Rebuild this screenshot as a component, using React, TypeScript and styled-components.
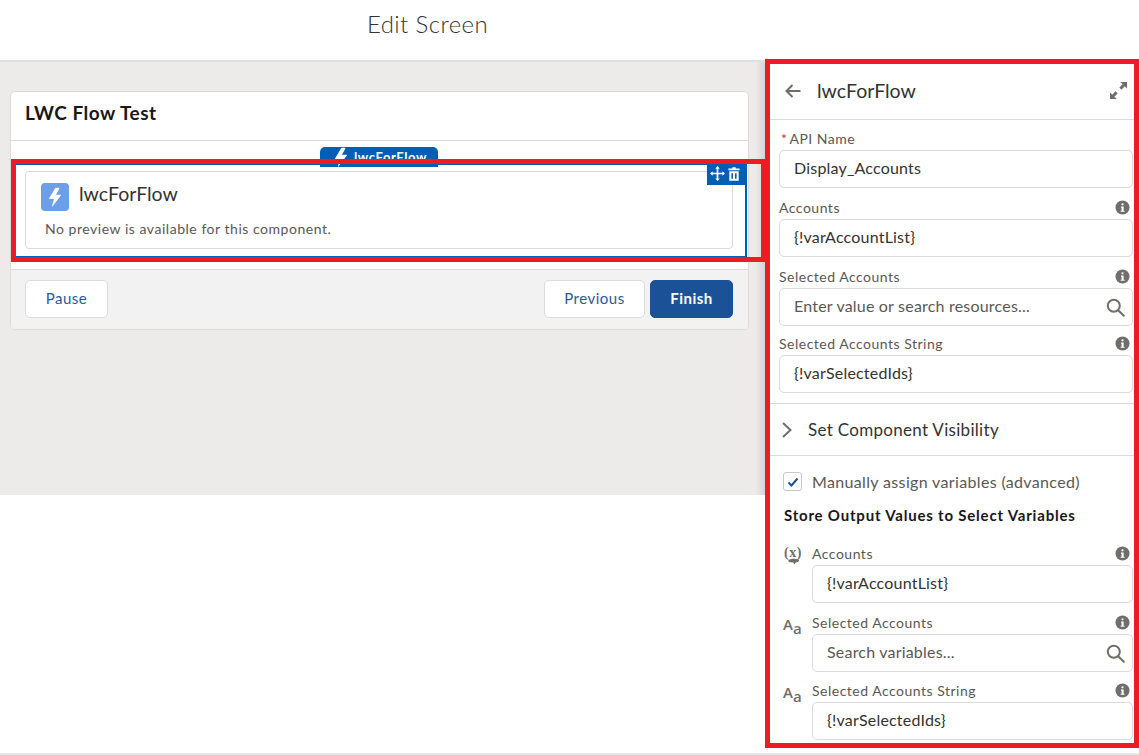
import { FC } from "react";
import styled, { createGlobalStyle } from "styled-components";

const FONT = `Lato, "Open Sans", "Liberation Sans", sans-serif`;

const Bolt: FC<{ size: number }> = ({ size }) => (
  <svg width={size} height={size} viewBox="0 0 24 24" fill="#fff">
    <path d="M12.500 1 5 13.500c-.3.500 0 1 .5 1h5.200L8.300 23c-.1.500.4.700.7.300l10-13c.3-.5 0-1-.5-1h-5.300l4.100-7.500c.2-.5-.1-.8-.5-.8h-3.300c-.4 0-.8.200-1 .500z" />
  </svg>
);

const InfoIcon: FC = () => (
  <InfoWrap viewBox="0 0 16 16" width="15" height="15">
    <circle cx="8" cy="8" r="7.500" fill="#706e6b" />
    <circle cx="8" cy="4.600" r="1.200" fill="#fff" />
    <path d="M6.400 7h2.800v4.400h1v1.200H6v-1.200h1V8.200h-.6z" fill="#fff" />
  </InfoWrap>
);

const SearchIcon: FC = () => (
  <svg width="19" height="19" viewBox="0 0 19 19" fill="none" stroke="#706e6b" strokeWidth="2">
    <circle cx="7.800" cy="7.800" r="6" />
    <path d="m12.200 12.200 5.600 5.600" strokeLinecap="round" />
  </svg>
);

const TextTypeIcon: FC = () => (
  <TypeMark>
    <BigA>A</BigA>
    <SmallA>a</SmallA>
  </TypeMark>
);

const VariableIcon: FC = () => (
  <svg width="24" height="20" viewBox="0 0 24 20">
    <text x="1" y="11" fontFamily="Liberation Serif, serif" fontSize="14" fontWeight="700" letterSpacing="0.5" fill="#706e6b">
      (x)
    </text>
    <path d="M5.500 14c3-1.500 7-1.500 10-.5 1 .6.600 2.200-.8 2.500l-2 .4-1.200 2-1.200-2-3-.2C5.900 16.400 4.900 15 5.500 14z" fill="#706e6b" />
  </svg>
);

const Field: FC<{
  label: string;
  value?: string;
  placeholder?: string;
  required?: boolean;
  info?: boolean;
  gap?: number;
}> = ({ label, value, placeholder, required, info = true, gap = 12 }) => (
  <FieldBox $gap={gap}>
    <LabelRow>
      <Label>
        {required && <Star>*</Star>}
        {label}
      </Label>
      {info && <InfoIcon />}
    </LabelRow>
    <InputBox>
      {placeholder ? <Placeholder>{placeholder}</Placeholder> : <span>{value}</span>}
      {placeholder && <SearchIcon />}
    </InputBox>
  </FieldBox>
);

const App: FC = () => {
  return (
    <Page>
      <GlobalStyle />
      <TopBar>
        <Title>Edit Screen</Title>
      </TopBar>
      <Main>
        <LeftColumn>
          <Canvas>
            <Card>
              <CardHeader>LWC Flow Test</CardHeader>
              <CardBody>
                <Selected>
                  <Tab>
                    <Bolt size={20} />
                    <span>lwcForFlow</span>
                  </Tab>
                  <Tools>
                    <svg width="15" height="15" viewBox="0 0 16 16" fill="#fff">
                      <path d="M8 0 5.600 2.800h1.500v4.300H2.800V5.600L0 8l2.800 2.400V8.900h4.300v4.300H5.600L8 16l2.400-2.800H8.900V8.900h4.300v1.500L16 8l-2.800-2.400v1.500H8.900V2.800h1.500z" />
                    </svg>
                    <svg width="12" height="14" viewBox="0 0 14 16" fill="#fff">
                      <path d="M5 0h4v1.600h4.500v2H.5v-2H5zM1.500 4.800h11V16h-11zM4 7v6.600h1.800V7zm4.200 0v6.600H10V7z" fillRule="evenodd" />
                    </svg>
                  </Tools>
                  <Inner>
                    <InnerHead>
                      <IconTile>
                        <Bolt size={20} />
                      </IconTile>
                      <InnerName>lwcForFlow</InnerName>
                    </InnerHead>
                    <Preview>No preview is available for this component.</Preview>
                  </Inner>
                </Selected>
              </CardBody>
              <CardFooter>
                <Button>Pause</Button>
                <FooterRight>
                  <Button $wide>Previous</Button>
                  <Button $primary>Finish</Button>
                </FooterRight>
              </CardFooter>
            </Card>
          </Canvas>
        </LeftColumn>
        <Panel>
          <PanelHeader>
            <svg width="18" height="18" viewBox="0 0 18 18" fill="none" stroke="#706e6b" strokeWidth="2">
              <path d="M16.500 9H2.500M8.500 3 2.500 9l6 6" />
            </svg>
            <PanelTitle>lwcForFlow</PanelTitle>
            <svg width="17" height="17" viewBox="0 0 18 18" fill="#706e6b">
              <path d="M11 0h7v7l-2.400-2.400-3.500 3.500-2.200-2.200 3.500-3.500zM7 18H0v-7l2.400 2.400 3.500-3.500 2.200 2.200-3.500 3.500z" />
            </svg>
          </PanelHeader>
          <Fields>
            <Field label="API Name" value="Display_Accounts" required info={false} />
            <Field label="Accounts" value="{!varAccountList}" />
            <Field label="Selected Accounts" placeholder="Enter value or search resources..." gap={10} />
            <Field label="Selected Accounts String" value="{!varSelectedIds}" />
          </Fields>
          <Visibility>
            <svg width="14" height="18" viewBox="0 0 14 18" fill="none" stroke="#706e6b" strokeWidth="2">
              <path d="m3 2 7.500 7L3 16" />
            </svg>
            <span>Set Component Visibility</span>
          </Visibility>
          <Outputs>
            <CheckRow>
              <CheckBox>
                <svg width="12" height="12" viewBox="0 0 12 12" fill="none" stroke="#1b5297" strokeWidth="2">
                  <path d="m1.500 6.500 3 3 6-7" />
                </svg>
              </CheckBox>
              <CheckLabel>Manually assign variables (advanced)</CheckLabel>
            </CheckRow>
            <StoreTitle>Store Output Values to Select Variables</StoreTitle>
            <OutputRow>
              <VariableIcon />
              <Field label="Accounts" value="{!varAccountList}" />
            </OutputRow>
            <OutputRow>
              <TextTypeIcon />
              <Field label="Selected Accounts" placeholder="Search variables..." gap={11} />
            </OutputRow>
            <OutputRow>
              <TextTypeIcon />
              <Field label="Selected Accounts String" value="{!varSelectedIds}" />
            </OutputRow>
          </Outputs>
        </Panel>
      </Main>
      <RedBox $left={765} $top={59} $width={374} $height={689} />
      <RedBox $left={11} $top={159} $width={755} $height={103} />
    </Page>
  );
};

export default App;

const GlobalStyle = createGlobalStyle`
  html, body {
    margin: 0;
    padding: 0;
    background: #fff;
  }
  * {
    box-sizing: border-box;
  }
`;

const Page = styled.div`
  position: relative;
  width: 1139px;
  height: 755px;
  overflow: hidden;
  font-family: ${FONT};
  color: #3e3e3c;
  border-bottom: 2px solid #e6e6e6;
`;

const TopBar = styled.header`
  height: 62px;
  border-bottom: 2px solid #dfdfdf;
  padding-left: 367px;
  padding-top: 8px;
`;

const Title = styled.h1`
  margin: 0;
  font-size: 24px;
  line-height: 32px;
  font-weight: 300;
  letter-spacing: 0.4px;
  color: #333;
`;

const Main = styled.div`
  display: grid;
  grid-template-columns: 765px 1fr;
`;

const LeftColumn = styled.div`
  height: 433px;
`;

const Canvas = styled.div`
  height: 433px;
  padding: 29px 16px 0 10px;
  background: linear-gradient(to right, #ecebe9 756px, #e2e1df 760px, #d4d4d4 765px);
`;

const Card = styled.div`
  width: 739px;
  background: #fff;
  border: 1px solid #dddbda;
  border-radius: 5px;
  overflow: hidden;
`;

const CardHeader = styled.div`
  height: 49px;
  padding: 0 14px 8px;
  display: flex;
  align-items: center;
  font-size: 19px;
  font-weight: 700;
  letter-spacing: 0.5px;
  color: #181818;
  border-bottom: 1px solid #dddbda;
`;

const CardBody = styled.div`
  padding: 22px 1px 11px 2px;
`;

const Selected = styled.div`
  position: relative;
  height: 95px;
  border: 2px solid #005fb2;
  padding: 6px 12px 7px 10px;
`;

const Tab = styled.div`
  position: absolute;
  left: 305px;
  top: -18px;
  width: 118px;
  height: 20px;
  display: flex;
  align-items: center;
  justify-content: center;
  gap: 3px;
  background: #005fb2;
  border-radius: 5px 5px 0 0;
  color: #fff;
  font-size: 13px;
  font-weight: 700;
  letter-spacing: 0.6px;
`;

const Tools = styled.div`
  position: absolute;
  right: -2px;
  top: -2px;
  width: 40px;
  height: 22px;
  display: flex;
  align-items: flex-end;
  justify-content: flex-start;
  gap: 3px;
  padding: 0 0 4px 3px;
  background: #005fb2;
`;

const Inner = styled.div`
  height: 78px;
  border: 1px solid #dddbda;
  border-radius: 4px;
  padding: 10px 15px 0;
`;

const InnerHead = styled.div`
  display: flex;
  align-items: center;
  gap: 10px;
`;

const IconTile = styled.div`
  width: 28px;
  height: 28px;
  display: flex;
  align-items: center;
  justify-content: center;
  background: #6d9fe8;
  border-radius: 4px;
`;

const InnerName = styled.div`
  font-size: 19.500px;
  line-height: 24px;
  padding-bottom: 5px;
  color: #333;
`;

const Preview = styled.p`
  margin: 8px 0 0 4px;
  font-size: 14px;
  line-height: 20px;
  letter-spacing: 0.53px;
  color: #5a5856;
`;

const CardFooter = styled.div`
  height: 60px;
  padding: 10px 15px 11px 14px;
  display: flex;
  justify-content: space-between;
  background: #f3f2f2;
  border-top: 1px solid #dddbda;
`;

const FooterRight = styled.div`
  display: flex;
  gap: 5px;
`;

const Button = styled.button<{ $primary?: boolean; $wide?: boolean }>`
  width: ${(p) => (p.$wide ? "101px" : "83px")};
  height: 38px;
  font-family: ${FONT};
  font-size: 15px;
  font-weight: ${(p) => (p.$primary ? 700 : 400)};
  letter-spacing: 0.5px;
  color: ${(p) => (p.$primary ? "#fff" : "#2b5a9e")};
  background: ${(p) => (p.$primary ? "#1b5297" : "#fff")};
  border: 1px solid ${(p) => (p.$primary ? "#1b5297" : "#dddbda")};
  border-radius: 5px;
  padding: 0 0 2px;
`;

const Panel = styled.aside`
  margin: 0 4px 0 5px;
  padding-top: 2px;
`;

const PanelHeader = styled.div`
  height: 56px;
  padding: 0 8px 2px 14px;
  display: flex;
  align-items: center;
  border-bottom: 1px solid #dddbda;
`;

const PanelTitle = styled.div`
  flex: 1;
  margin-left: 15px;
  font-size: 19.500px;
  color: #333;
`;

const Fields = styled.div`
  padding: 11px 2px 0 9px;
  border-bottom: 1px solid #dddbda;
  height: 284px;
`;

const FieldBox = styled.div<{ $gap: number }>`
  flex: 1;
  margin-bottom: ${(p) => p.$gap}px;
`;

const LabelRow = styled.div`
  height: 19px;
  display: flex;
  align-items: flex-start;
  justify-content: space-between;
`;

const Label = styled.label`
  font-size: 14px;
  line-height: 15px;
  letter-spacing: 0.5px;
  color: #5a5856;
`;

const Star = styled.span`
  color: #c23934;
  margin: 0 2px;
`;

const InfoWrap = styled.svg`
  margin-right: 3px;
  flex: none;
`;

const InputBox = styled.div`
  height: 38px;
  padding: 0 7px 3px 14px;
  display: flex;
  align-items: center;
  justify-content: space-between;
  border: 1px solid #dddbda;
  border-radius: 5px;
  font-size: 16px;
  letter-spacing: 0.2px;
  color: #333;
  background: #fff;

  svg {
    margin-top: 3px;
  }
`;

const Placeholder = styled.span`
  color: #5a5856;
`;

const Visibility = styled.div`
  height: 52px;
  padding: 0 0 0 10px;
  display: flex;
  align-items: center;
  gap: 14px;
  font-size: 17px;
  letter-spacing: 0.3px;
  color: #333;
  border-bottom: 1px solid #dddbda;
`;

const Outputs = styled.div`
  padding: 16px 2px 0 13px;
`;

const CheckRow = styled.div`
  display: flex;
  align-items: center;
  gap: 10px;
  height: 19px;
`;

const CheckBox = styled.span`
  width: 19px;
  height: 19px;
  display: flex;
  align-items: center;
  justify-content: center;
  border: 1px solid #c9c7c5;
  border-radius: 3px;
`;

const CheckLabel = styled.span`
  font-size: 16px;
  letter-spacing: 0.35px;
  color: #5a5856;
`;

const StoreTitle = styled.div`
  margin: 15px 0 22px 1px;
  height: 18px;
  font-size: 15px;
  line-height: 18px;
  font-weight: 700;
  letter-spacing: 0.8px;
  color: #181818;
`;

const OutputRow = styled.div`
  display: grid;
  grid-template-columns: 29px 1fr;
`;

const TypeMark = styled.span`
  display: flex;
  align-items: flex-end;
  height: 17px;
  color: #706e6b;
  font-family: "Open Sans", sans-serif;
  font-weight: 600;
  line-height: 1;
`;

const BigA = styled.span`
  font-size: 15px;
`;

const SmallA = styled.span`
  font-size: 15px;
  margin-bottom: -4px;
`;

const RedBox = styled.div<{ $left: number; $top: number; $width: number; $height: number }>`
  position: absolute;
  left: ${(p) => p.$left}px;
  top: ${(p) => p.$top}px;
  width: ${(p) => p.$width}px;
  height: ${(p) => p.$height}px;
  border: 5px solid #ed1c24;
  pointer-events: none;
`;
